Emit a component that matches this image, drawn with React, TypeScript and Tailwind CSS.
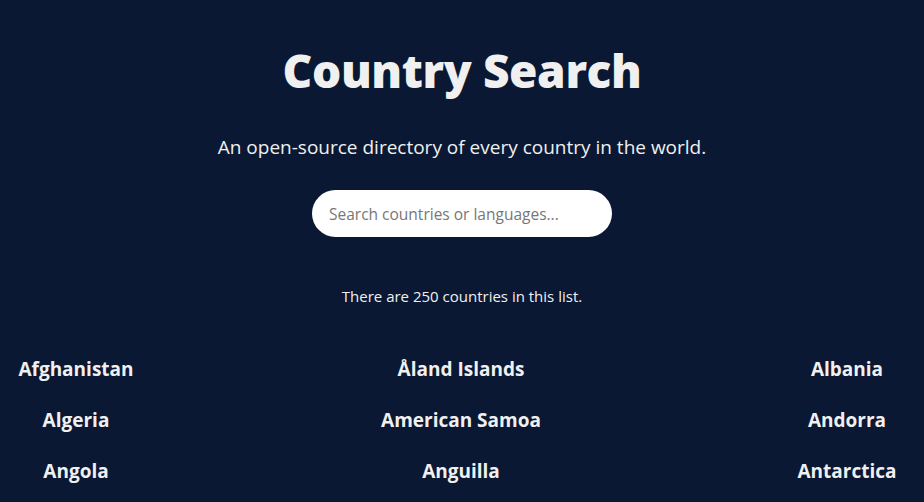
import React from "react";

const countries = [
  "Afghanistan", "Åland Islands", "Albania",
  "Algeria", "American Samoa", "Andorra",
  "Angola", "Anguilla", "Antarctica",
];

export default function App() {
  return (
    <div
      className="min-h-screen bg-[#0a1833] text-[#f0f0f0] flex flex-col items-center"
      style={{ fontFamily: '"Open Sans", "Noto Sans", sans-serif' }}
    >
      <h1 className="mt-[40px] text-[46px] leading-[60px] font-extrabold tracking-[-0.4px]">Country Search</h1>
      <p className="mt-[34px] text-[19px] leading-[26px]">An open-source directory of every country in the world.</p>
      <input
        className="mt-[30px] w-[300px] h-[47px] rounded-full bg-white px-[17px] text-[15.5px] text-[#333] placeholder:text-[#777] outline-none"
        placeholder="Search countries or languages..."
      />
      <p className="mt-[49px] text-[15px] leading-[20px]">There are 250 countries in this list.</p>
      <div className="mt-[50px] w-full grid grid-cols-[152px_1fr_154px] gap-y-[25px]">
        {countries.map((c) => (
          <div key={c} className="text-center text-[19px] leading-[26px] font-bold">
            {c}
          </div>
        ))}
      </div>
    </div>
  );
}
